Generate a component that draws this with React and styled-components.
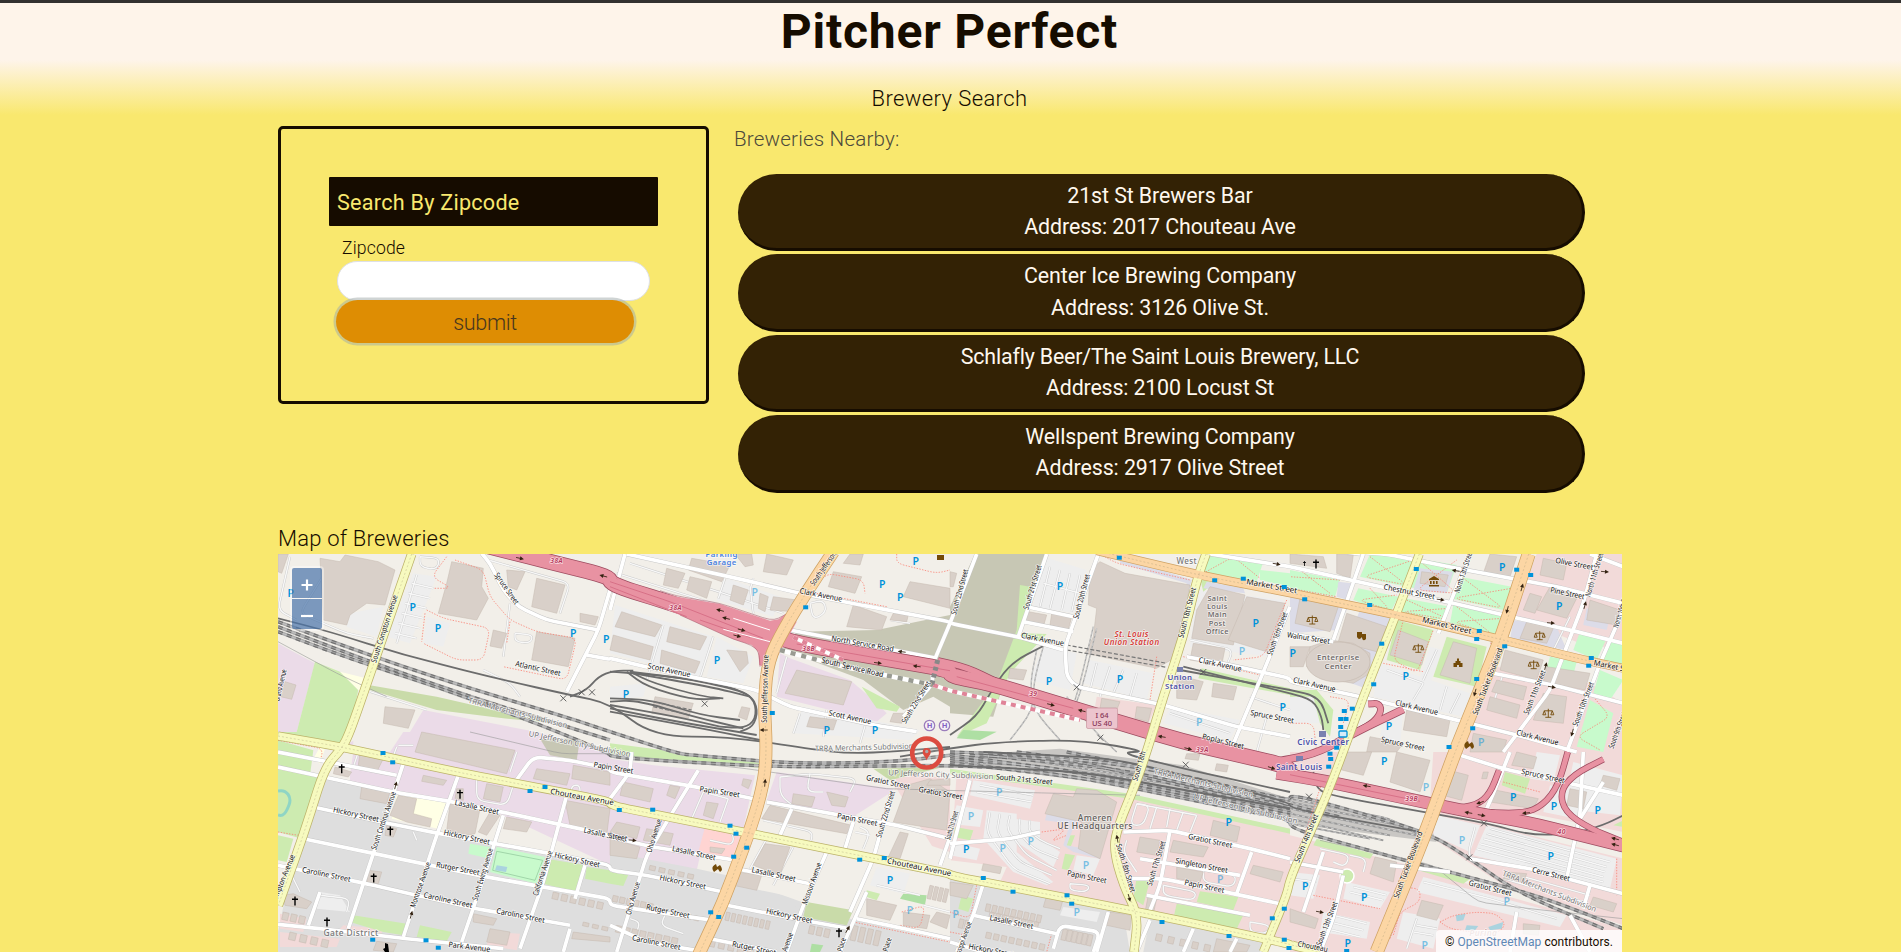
import React from 'react';
import styled, { createGlobalStyle } from 'styled-components';

const ink = '#160c00';
const sans = `Roboto, "Liberation Sans", sans-serif`;

const GlobalStyle = createGlobalStyle`
  *, *::before, *::after { box-sizing: border-box; }
  body { margin: 0; overflow: hidden; background: #f9e86e; color: ${ink}; font-family: ${sans}; }
`;

const Page = styled.div`
  height: 952px;
  overflow: hidden;
  border-top: 3px solid #333130;
  background: linear-gradient(#fef4ea 0, #fef4ea 57px, #f9e86e 112px);
`;
const Header = styled.header`
  display: flex;
  flex-direction: column;
  align-items: center;
  height: 123px;
  padding-right: 2px;
`;
const Title = styled.h1`
  margin: 0;
  height: 83px;
  font-size: 48px;
  line-height: 57px;
  font-weight: 700;
  letter-spacing: 0.78px;
`;
const Subtitle = styled.h2`
  margin: 0;
  font-size: 22px;
  line-height: 26px;
  font-weight: 300;
  letter-spacing: 0.4px;
`;
const Container = styled.main`
  width: 1344px;
  margin-left: 278px;
`;
const Columns = styled.div`
  display: flex;
  height: 399px;
  align-items: flex-start;
`;
const SearchPanel = styled.form`
  width: 431px;
  height: 278px;
  padding: 48px;
  border: 3px solid ${ink};
  border-radius: 5px;
`;
const Legend = styled.div`
  height: 49px;
  padding: 0 8px;
  border-radius: 1px;
  background: ${ink};
  color: #f9e86e;
  font-size: 21.6px;
  line-height: 52px;
  letter-spacing: 0.25px;
`;
const Fields = styled.div`
  display: flex;
  flex-direction: column;
  padding: 10px 8px 0 6px;
`;
const Label = styled.label`
  padding-left: 7px;
  height: 25px;
  font-size: 17.6px;
  line-height: 24px;
  font-weight: 300;
  letter-spacing: 0.15px;
`;
const Input = styled.input`
  height: 40px;
  margin-left: 2px;
  border: 1px solid #dee0e6;
  border-radius: 20px;
  background: #fff;
  outline: none;
`;
const Submit = styled.button`
  width: 298px;
  height: 43px;
  margin: -1px 0 0 1px;
  padding: 2px 0 0;
  border: 0;
  border-radius: 22px;
  background: #de8d03;
  box-shadow: 0 0 0 2.5px rgba(160, 170, 170, 0.5);
  color: #48361f;
  font-family: ${sans};
  font-size: 21.6px;
  font-weight: 300;
  letter-spacing: -0.35px;
`;
const Results = styled.section`
  width: 851px;
  margin-left: 25px;
`;
const ResultsTitle = styled.h3`
  margin: 0;
  height: 48px;
  font-size: 20.6px;
  line-height: 26px;
  font-weight: 300;
  letter-spacing: 0.17px;
  color: #4d4a3b;
`;
const CardList = styled.div`
  display: flex;
  flex-direction: column;
  gap: 3px;
  padding-left: 4px;
`;
const Card = styled.article`
  height: 77.4px;
  padding: 6px;
  border: solid ${ink};
  border-width: 0 3px 3px 0;
  border-radius: 40px;
  background: #332205;
  color: #fff8ee;
  text-align: center;
  font-size: 21.4px;
  line-height: 31.2px;
  letter-spacing: ${(p) => p.$track}px;
`;
const MapTitle = styled.h3`
  margin: 0;
  height: 29px;
  font-size: 22px;
  line-height: 28px;
  font-weight: 300;
  letter-spacing: 0.2px;
`;
const MapFrame = styled.section`
  position: relative;
  height: 398px;
  overflow: hidden;
`;
const MapSvg = styled.svg`
  display: block;
  width: 1344px;
  height: 398px;
  font-family: "Noto Sans", sans-serif;
`;
const ZoomControl = styled.div`
  position: absolute;
  top: 12px;
  left: 12px;
  display: flex;
  flex-direction: column;
  gap: 1px;
  padding: 2px;
  border-radius: 4px;
  background: rgba(255, 255, 255, 0.4);
`;
const ZoomButton = styled.button`
  display: grid;
  place-items: center;
  width: 30px;
  height: 30px;
  padding: 4px 0 0;
  border: 0;
  border-radius: ${(p) => (p.$top ? '2px 2px 0 0' : '0 0 2px 2px')};
  background: rgba(0, 60, 136, 0.5);
`;
const Attribution = styled.div`
  position: absolute;
  right: 0;
  bottom: 0;
  width: 186px;
  height: 22px;
  padding-left: 9px;
  border-radius: 4px 0 0 0;
  background: rgba(255, 255, 255, 0.8);
  font-size: 12px;
  line-height: 24px;
  letter-spacing: 0.04px;
  white-space: nowrap;
  a { color: #5f88b6; text-decoration: none; }
`;

/* Map geometry is kept per sector, three units to a pixel. */
const origin = { A: [270, 510], B: [610, 550], C: [950, 550], D: [1290, 550], E: [270, 732], F: [610, 752], G: [950, 752], H: [1290, 752] };
const points = (s) => {
  let o = origin.A;
  const out = [];
  s.trim().split(/\s+/).forEach((t) => {
    if (origin[t]) o = origin[t];
    else {
      const [x, y] = t.split(',').map(Number);
      out.push([+(o[0] + x / 3).toFixed(1), +(o[1] + y / 3).toFixed(1)]);
    }
  });
  return out;
};
const join = (s) => points(s).map((p) => p.join(',')).join(' ');

/* Line through the points with its corners rounded to at most r pixels. */
const curve = (s, r) => {
  const p = points(s);
  let d = `M${p[0]}`;
  for (let i = 1; i < p.length - 1; i += 1) {
    const [a, b, c] = [p[i - 1], p[i], p[i + 1]];
    const toward = (q) => {
      const len = Math.hypot(q[0] - b[0], q[1] - b[1]) || 1;
      const k = Math.min(r, len / 2) / len;
      return [b[0] + (q[0] - b[0]) * k, b[1] + (q[1] - b[1]) * k];
    };
    d += `L${toward(a)}Q${b} ${toward(c)}`;
  }
  return `${d}L${p[p.length - 1]}`;
};

const areas = [
  ['#ebdbe8', [
    'A 24,400 60,420 135,460 80,666 24,666', 'A 460,600 800,666 E 1020,60 1020,200 640,130 215,45 300,0 420,0',
    'E 240,130 250,60 560,125 880,185 1020,210 1020,400 700,250 540,210 380,190 240,160',
    'F 0,20 130,40 435,70 400,230 0,155', 'F 0,160 290,225 260,355 0,300', 'F 500,60 850,110 800,220 470,145',
    'B 510,310 540,325 720,390 790,450 830,490 800,515 500,440']],
  ['#dedede', [
    'E 150,130 370,180 355,265 520,300 1020,400 1020,660 24,660 24,600 70,380',
    'F 0,300 260,350 350,370 590,455 720,500 1020,570 1020,600 0,600', 'F 560,455 720,480 700,600 500,600',
    'G 80,400 520,480 540,600 0,600 0,380', 'G 600,500 950,570 930,600 580,600']],
  ['#f2dad9', [
    'G 20,60 540,130 1020,230 1020,570 540,470 0,370', 'H 0,250 360,340 640,430 1000,530 1000,600 0,600',
    'H 420,170 600,220 1000,320 1000,520 640,400 430,260', 'H 430,0 1000,0 1000,240 700,180 420,150',
    'D 560,340 900,400 1000,460 1000,606 520,606', 'D 740,12 1000,12 1000,300 870,280 670,200', 'C 440,440 620,465 590,530 430,500',
    'F 860,60 1020,80 1020,300 840,240', 'E 220,580 340,590 330,620 200,600', 'H 0,0 150,0 120,80 0,60',
    'E 30,545 110,560 100,600 30,590', 'E 660,600 750,605 740,655 650,640', 'E 30,600 210,620 200,645 30,645']],
  ['#ffd4d2', ['F 285,225 395,245 365,320 265,300']],
  ['#f2efe9', [
    'F 460,150 720,200 860,110 1020,370 640,290 420,230', 'F 420,250 650,300 780,330 720,470 380,400',
    'F 800,330 1020,370 1020,430 800,400', 'H 130,140 400,180 370,240 100,150', 'G 0,325 170,345 150,390 0,370', 'E 250,0 400,0 360,60 250,50']],
  ['#eeeeee', [
    'H 440,190 570,220 540,300 430,250', 'H 590,220 980,320 960,410 550,310', 'G 70,85 255,115 240,170 60,130',
    'G 110,175 200,185 200,300 310,390 290,400 190,360 100,260', 'G 190,200 270,210 270,260 330,300 310,345 200,270',
    'C 280,20 410,60 370,190 250,170', 'C 420,330 610,370 590,450 400,400', 'C 280,290 380,310 360,420 240,390',
    'B 350,85 510,140 490,200 320,150', 'B 15,165 310,260 270,380 0,310', 'B 320,260 430,320 400,400 290,380',
    'A 430,190 500,200 420,400 350,380', 'A 470,320 540,340 520,410 460,400', 'B 0,410 110,400 100,440 0,450',
    'B 580,470 930,540 900,570 550,550', 'C 740,120 1000,150 960,320 720,290', 'C 660,470 870,510 840,570 640,520',
    'H 170,390 300,420 270,470 160,440', 'H 0,360 90,370 70,440 0,430', 'H 400,375 830,490 810,525 380,420',
    'H 340,480 450,500 430,590 320,560', 'H 100,480 240,510 230,560 90,540', 'D 270,340 540,430 520,500 250,440',
    'D 420,290 460,300 420,400 390,380', 'D 0,430 70,420 90,520 0,520', 'H 740,0 810,10 790,90 720,80',
    'H 780,100 880,120 860,200 760,180', 'H 850,30 1000,70 990,190 820,170', 'F 800,345 900,365 880,425 780,400', 'E 150,480 210,490 240,540 140,530',
    'A 240,310 340,290 320,380 230,350', 'G 340,465 450,480 440,510 330,490', 'G 380,310 450,320 430,370 370,355', 'G 20,160 100,175 90,225 0,215',
    'D 280,510 340,480 330,590 270,560', 'G 0,270 90,290 80,325 0,310']],
  ['#c7c7b4', ['B 560,245 800,240 1020,195 C 0,170 75,12 290,12 215,220 130,500 0,490 B 1020,470 970,440 880,480 760,390 520,300', 'E 810,20 930,20 920,85 840,70']],
  ['#cdebb0', [
    'A 135,455 210,485 265,540 240,666 80,666', 'E 24,0 230,0 215,38 24,5', 'E 24,25 130,55 120,130 24,110', 'E 24,112 150,135 95,320 24,300',
    'E 830,380 945,400 920,480 820,455', 'E 950,405 1020,415 1020,455 945,440', 'C 210,105 240,110 215,250 290,252 180,370 110,520 20,560 140,400 200,240',
    'C 755,355 1020,415 1020,435 745,385', 'D 0,420 80,420 130,480 120,560 90,520 70,440 0,440', 'B 755,410 870,470 860,485 800,475',
    'G 15,225 70,235 60,265 10,255', 'G 560,375 600,385 580,460 550,440', 'G 680,455 880,490 860,530 670,500', 'G 750,418 865,435 850,475 740,450',
    'G 35,430 70,440 55,480 25,470', 'H 645,60 720,80 705,125 635,100', 'D 320,210 430,240 390,360 290,330', 'D 470,260 590,290 560,410 430,380',
    'E 250,550 410,575 400,610 340,600 240,570', 'E 450,580 545,600 530,628 440,615', 'F 0,360 55,368 40,402 0,395', 'F 770,415 810,425 800,445 770,435',
    'C 750,85 790,100 760,125', 'C 660,280 690,200 680,310 650,320', 'E 24,310 70,320 50,390 24,385',
    'H 80,260 250,305 240,320 70,280', 'H 380,335 540,380 520,395 370,350', 'G 0,50 540,125 1020,230 1020,245 540,140 0,65',
    'B 0,580 460,640 F 480,50 0,10', 'H 970,220 1000,205 1000,225', 'G 355,250 375,250 360,290 350,285', 'G 345,305 375,310 355,355 335,350']],
  ['#c9dba9', ['A 265,520 500,560 850,640 700,625 500,600 300,540', 'F 590,450 730,475 710,520 580,495', 'F 790,50 1000,45 840,85']],
  ['#c8facc', [
    'D 240,12 370,25 350,110 210,80', 'D 0,60 150,90 135,140 0,115', 'D 205,115 325,140 300,190 190,150', 'D 510,80 665,110 640,180 480,145',
    'D 490,165 640,200 610,260 480,220', 'D 375,25 500,45 470,130 350,110', 'D 345,145 480,170 450,215 330,190', 'D 870,245 950,265 920,330 850,300',
    'D 780,320 860,335 850,375 770,355', 'D 930,360 1000,390 960,450 910,430', 'D 900,450 970,490 940,606 860,590', 'C 780,12 940,35 920,95 760,65',
    'E 680,345 825,375 800,455 660,420', 'E 600,335 660,345 650,378 595,365', 'C 930,60 1020,70 1020,110 930,90', 'D 960,270 1000,280 1000,345 940,330']],
  ['#aedfa3', ['F 880,425 950,430 945,458 870,440', 'C 40,540 140,545 90,570 20,565', 'F 605,575 640,580 630,600 600,600']],
  ['#ffffe5', ['E 380,190 530,210 505,290 365,260', 'A 210,485 310,510 270,545', 'E 150,45 165,50 150,95 130,80']],
  ['#dcdce8', [
    'G 290,185 380,200 350,280 455,300 450,320 370,300 340,280 360,215 285,205', 'D 210,180 320,210 240,420 130,380', 'D 0,140 180,160 140,240 0,250',
    'D 670,210 800,230 830,300 660,270', 'C 510,20 725,90 700,180 690,220 680,200 710,100 510,40', 'D 390,55 490,65 470,130 370,120', 'D 890,175 960,200 950,240 880,225', 'C 770,95 880,115 885,130 760,115', 'D 145,95 185,100 175,150 140,140']],
  ['#aad3df', ['H 497,490 527,485 520,505 500,508', 'H 530,520 565,522 555,535 525,535', 'H 595,525 640,510 635,530 600,535', 'E 680,400 712,405 708,420 675,415']],
  ['#c9c7c4', ['G 100,5 330,-10 700,40 1020,140 H 200,175 430,245 440,270 0,215 G 1020,205 700,130 400,85 0,35']],
];

const buildings = `A 150,145 210,155 225,135 325,155 375,180 345,285 290,280 240,315 230,345 160,330
A 545,155 640,175 635,230 655,265 620,330 505,310 530,220
A 800,205 885,225 860,310 785,290
A 800,365 915,385 895,470 785,450
A 670,360 710,370 695,415 660,408
A 345,590 435,600 415,655 340,640
A 45,515 78,525 65,568 32,560
A 710,180 765,185 740,240 715,230
A 24,132 55,132 35,190 24,185
A 930,310 985,320 975,345 930,335
E 455,0 735,55 710,125 435,60
E 800,110 900,125 890,160 790,140
E 910,100 1020,120 1020,160 905,140
E 460,130 530,145 520,160 455,148
E 650,155 700,165 690,210 640,200
E 275,165 360,180 350,215 270,200
E 540,215 630,230 615,305 590,310 530,295
E 660,240 690,250 650,310 625,300
E 710,255 785,270 770,300 700,290
E 385,190 440,200 430,245 485,260 480,285 410,270 360,250
E 195,105 245,120 235,135 190,125
E 40,490 70,485 125,510 110,530 45,520
E 295,415 335,420 325,455 290,450
E 270,60 340,80 320,120 265,100
E 885,205 1020,230 1010,310 900,280
E 660,590 720,600 710,640 650,630
E 560,170 580,170 580,205 555,200
E 350,280 380,290 370,315 345,310
E 320,628 380,635 370,660 310,655
E 610,545 680,560 670,580 610,570
E 910,600 1020,615 1020,630 905,620
B 245,25 360,45 335,95 235,60
B 375,12 425,12 430,45 405,50
B 470,12 550,30 530,75 460,65
B 170,55 225,70 205,115 160,105
B 240,80 305,95 290,145 230,120
B 370,105 415,120 400,165 360,150
B 450,130 475,140 465,185 445,175
B 490,140 560,150 550,185 480,180
B 35,185 155,225 135,260 15,230
B 180,230 290,260 270,300 170,275
B 10,255 130,290 120,330 0,300
B 155,300 270,335 255,370 150,340
B 350,300 410,305 415,340 390,365
B 670,65 755,80 735,130 655,110
B 730,165 830,200 815,240 710,230
B 900,95 1020,115 1020,175 880,140
B 720,12 760,12 750,45 700,40
B 850,190 895,195 890,215 840,210
B 560,360 725,395 700,465 525,430
B 600,500 680,510 670,540 590,530
B 135,440 250,460 235,505 125,490
B 395,470 420,475 410,510 385,500
B 850,490 880,490 875,520 840,515
C 450,35 525,70 720,105 680,320 620,355 405,310 430,260 440,175 415,165 420,60
C 780,110 885,135 850,285 725,265 740,180
C 890,140 1005,160 965,310 835,270
C 235,185 290,195 280,230 225,220
C 305,190 365,200 355,240 300,225
C 730,280 825,295 815,345 720,330
C 680,375 760,395 740,450 680,445
C 560,470 605,475 595,515 555,505
C 455,445 510,455 500,480 450,475
C 790,400 860,410 850,450 785,440
C 180,355 230,360 220,390 175,385
C 0,65 20,70 10,110 0,110
D 30,145 145,170 120,245 15,220
D 170,190 290,230 260,305 145,275
D 60,290 120,270 190,280 240,310 240,370 190,400 100,385 50,350
D 395,65 475,75 465,110 390,100
D 325,240 415,275 395,345 300,315
D 490,275 560,295 540,400 450,375
D 600,12 680,20 660,80 580,70
D 720,130 755,140 735,190 700,180
D 780,110 870,125 830,205 740,180
D 710,215 790,235 770,280 690,265
D 645,300 760,330 740,390 630,360
D 620,390 710,410 700,450 605,425
D 600,440 690,465 680,505 590,480
D 770,350 900,370 885,420 760,395
D 760,430 830,440 820,520 730,510
D 350,480 480,510 470,560 340,540
D 760,25 830,40 820,90 750,75
D 900,150 990,180 980,225 890,210
D 140,12 190,15 180,85 140,70
D 0,290 60,290 40,350 0,350
D 240,560 340,580 320,606 230,606
D 550,550 650,570 640,606 540,606
D 0,12 100,20 110,55 0,40
F 40,90 130,110 120,150 30,130
F 180,100 210,105 195,140 170,130
F 290,150 325,155 310,200 280,190
F 400,80 425,85 415,110 395,100
F 550,125 615,135 605,165 545,155
F 650,120 715,135 705,165 665,160
F 480,160 725,220 710,245 455,200
F 465,275 540,285 510,370 430,340
F 385,360 455,370 440,415 370,400
F 890,100 960,80 1020,120 1010,235 850,210
F 870,240 895,245 870,320 835,315
F 300,285 345,290 335,305 300,300
F 20,210 90,225 80,260 0,240
F 110,230 190,245 180,280 100,265
F 0,260 90,285 80,320 0,310
F 770,440 860,460 840,505 770,490
F 960,85 1020,80 1020,100 950,100
F 880,480 960,490 950,530 880,520
F 980,480 1020,490 1010,530 960,510
G 310,125 370,135 380,110 440,115 500,150 450,320 385,290 395,210 285,185
G 570,255 630,265 620,310 560,300
G 670,265 775,285 760,315 660,300
G 790,205 870,225 860,270 780,250
G 680,345 760,360 750,390 680,380
G 910,340 1000,360 990,390 900,365
G 100,335 155,345 150,365 95,355
G 480,480 545,490 540,535 470,520
G 595,430 620,440 610,485 585,480
G 0,390 70,400 50,440 0,430
G 290,430 340,440 330,475 280,465
G 710,5 750,5 745,25 705,20
G 800,35 835,40 830,60 795,55
G 800,560 900,580 890,600 790,600
H 150,0 245,0 220,70 140,50
H 320,0 420,25 390,120 300,90
H 460,50 535,70 515,145 440,125
H 255,315 320,330 310,390 240,365
H 395,445 460,460 440,505 380,490
H 620,115 745,140 730,170 600,150
H 840,110 890,120 880,170 830,160
H 680,0 740,15 730,50 665,40
H 0,470 85,500 75,530 0,510
H 650,360 710,365 700,390 640,380
H 910,435 980,455 970,480 900,460
H 580,60 595,60 590,80 575,80
H 940,70 990,80 980,115 930,100
H 700,515 750,520 745,550 700,545`.split('\n');

/* Small lots laid out in rows: start, step, count, width, height. */
const lots = [
  ['E 850,480', 28, 6, 8, 9], ['E 940,570', 30, 3, 8, 5], ['F 120,340', 30, 5, 8, 6], ['F 350,480', 18, 8, 5, 11], ['F 10,430', 22, 6, 7, 8],
  ['F 110,460', 25, 7, 7, 6], ['G 110,455', 20, 9, 6, 10], ['G 120,480', 20, 8, 6, 9], ['G 30,500', 18, 2, 6, 12], ['G 620,545', 38, 5, 8, 9],
  ['F 960,400', 16, 4, 5, 18], ['F 600,520', 24, 3, 7, 11], ['E 40,540', 26, 3, 8, 10], ['E 60,600', 34, 4, 9, 10], ['G 340,530', 16, 6, 6, 15],
  ['G 110,540', 24, 8, 7, 8], ['F 20,520', 25, 8, 8, 9], ['F 300,560', 30, 8, 8, 10], ['F 730,520', 24, 4, 7, 20],
];

const minor = `A 635,130 660,160 700,240 745,290 830,330 985,360
A 1020,240 985,360 890,545
A 950,435 1020,448 B 0,325 190,370 440,420 540,470 790,525 920,545
B 45,12 0,180
B 50,12 380,85 570,130 780,170 1020,215 C 0,220 210,262 340,300
C 80,12 0,220 B 965,350 970,400 880,500
B 540,240 980,325
C 290,12 205,260
C 445,12 345,290 350,380 380,410 640,465
C 230,170 370,200
C 220,215 370,245
C 710,320 840,345 1020,385 D 0,395 210,440 500,510 700,560 860,606
D 210,12 0,-20
C 780,12 1020,50 D 0,50 340,125 620,190 860,245 1000,280
D 220,12 130,270
C 1020,170 930,390 840,606
C 1020,-5 D 0,-5 290,12 500,55 800,110 1000,160
D 540,12 480,160 445,250
D 920,12 880,160 780,420 640,606
D 1000,180 930,340 830,606
D 610,370 790,405 1000,460
D 0,250 130,275
C 640,465 860,530 1020,560
H 480,0 640,50 1000,130
H 660,0 620,100 590,170
H 880,0 870,190 830,380
H 940,90 870,200
H 540,320 720,350 1000,425
H 900,400 880,470
D 900,12 1000,50
E 24,60 380,130
E 24,105 370,180 550,210 720,245 1020,310 F 0,255 130,285 380,325
E 130,225 360,275 510,305 870,370 1020,400 F 0,355 110,370 340,420
E 100,320 290,360 650,435 1020,500 F 0,460 310,505
E 24,400 290,455 440,490 620,530 900,580
E 24,577 150,590 410,620 700,650
E 400,95 235,590
E 565,130 500,310 400,615
E 700,250 640,440 575,630
E 890,190 820,450 750,650
E 735,150 790,75 900,85 1020,110 F 0,60 260,105 430,140
E 900,590 880,660
E 945,400 915,500
E 150,480 115,580
F 265,55 185,185 110,310 20,600
F 65,0 60,60 0,140
F 470,150 860,220 1020,260
F 545,170 510,250
F 730,210 705,290
F 845,120 790,320 720,480
F 650,300 580,460 530,600
F 380,350 600,395
F 350,460 580,505 720,530
F 770,420 690,600
F 740,500 860,525 1020,560
F 0,520 110,570 290,600
F 300,560 500,600
F 1020,255 990,340
G 60,85 0,320
G 100,395 70,490 20,600
G 70,490 320,545
G 310,590 330,520 450,540 430,600
G 475,480 440,600
G 520,240 660,235 900,290 1020,320
G 660,235 630,400 590,500
G 570,320 870,370
G 530,380 640,380 990,455
G 905,300 860,425
G 0,275 180,260 270,240
G 600,505 560,600
G 590,430 900,490
G 730,530 700,600
G 860,560 840,600
G 0,570 100,600
H 160,370 130,500 90,600
H 0,330 160,360
H 100,300 40,480
H 300,340 480,360
H 680,480 660,600
H 840,490 900,600`.split('\n');

const yards = `A 170,180 90,310 230,370 310,385
A 60,140 24,300 80,330
A 450,140 510,145 500,180 450,170 450,140
A 440,195 380,400
A 425,220 490,235
A 415,250 480,265
A 405,280 470,295
A 395,310 460,325
A 385,340 450,355
A 375,370 440,385
A 655,150 900,220 870,310
A 735,370 790,375 780,400 735,395 735,370
A 280,560 250,666
A 300,545 470,600
A 720,280 700,440
A 640,480 720,520 750,560
B 60,40 340,130 520,190
B 345,85 325,145
B 340,170 20,70
B 160,225 110,390
B 310,260 270,385
B 420,110 430,190
B 600,160 640,150 650,185 610,210 600,160
B 570,490 550,550
B 650,480 640,560
B 770,510 750,580
B 530,320 500,430
B 840,210 900,220
B 430,85 420,120
C 300,50 270,170
C 330,60 300,175
C 360,70 335,180
C 390,75 365,185
C 280,100 390,130
C 440,340 420,420
C 480,350 450,440
C 520,360 490,430
C 560,370 540,440
C 720,270 850,300 830,345
C 660,490 840,550
C 680,480 860,530
C 950,500 920,606
C 900,440 1020,480
D 440,300 400,390
D 290,360 400,400
D 470,410 450,480
D 510,430 480,490
D 400,400 370,450
D 640,370 610,460
D 840,200 780,320
H 600,230 960,330
H 590,245 950,345
H 580,260 945,360
H 570,275 940,375
H 560,290 940,390
H 555,225 535,300 545,320
H 90,290 180,310 165,345 130,330
H 180,310 230,320 220,360
H 190,405 290,430
H 180,420 280,445
H 0,380 80,390
H 400,390 600,440 800,500
H 380,500 350,590
H 380,520 440,530
H 370,540 430,550
H 130,490 230,515
H 120,510 220,535
H 110,530 210,555
H 650,360 900,430
H 640,380 880,450
G 120,180 110,240 190,350 300,395
G 150,185 140,240 210,330 305,370
G 180,190 170,230 230,310 320,355
G 210,200 205,240 250,290 325,320
G 240,205 235,235 270,265 330,290
G 90,100 250,130
G 80,120 245,150
G 560,155 540,220 580,220 600,160 560,155
G 620,165 600,230
G 660,170 650,225
G 700,180 680,235
G 740,190 720,240
G 560,155 740,190
G 530,265 520,300 560,360
G 640,400 740,420 730,445 640,430 640,400
G 360,395 420,400 410,420 360,415 360,395
G 760,355 860,370 850,405 760,390 760,355
G 900,510 960,520 950,545 900,540 900,510
F 460,205 610,240 600,275
F 510,75 510,130 560,170
F 600,65 590,120 640,120
F 510,75 600,65 740,80 720,120
F 750,225 780,240 760,290
F 735,240 780,250
F 470,260 420,350
F 550,285 490,400
F 280,120 245,200
F 355,140 330,210
F 280,120 355,140
F 300,230 370,240 370,280 300,265
F 60,500 90,510 80,540
F 170,480 150,520 220,545
F 940,460 1020,480
F 800,400 930,430
E 385,40 430,40
E 380,45 365,85
E 265,60 250,105
E 740,60 720,120
E 620,140 620,205 710,220 730,160
E 900,195 905,160 930,160 930,190
E 60,420 90,480
E 430,300 440,325
E 150,490 240,500 230,540`.split('\n');

const tracks = `A 24,325 180,365 400,435 700,510 900,555 1020,580 B 130,560 360,560 600,597 F 720,5 860,-2 1020,-15
A 900,560 950,540 985,500 B 10,362 70,362
B 0,365 200,380 390,420 435,450 438,510 400,535 330,530
B 60,365 300,395 420,430 445,480 430,530 390,545
B 50,365 110,410 250,450 330,445
B 60,365 130,400 280,440 340,445
B 70,370 300,410 420,440
B 0,455 80,450 250,500 400,535
B 0,465 200,500 330,530
B 0,475 200,515 440,555
B 0,485 250,530 450,570
B 0,445 130,450 270,495 390,510
C 0,555 80,500 120,430 180,340 280,288
C 700,350 1020,430 D 0,430 70,450 95,500 100,540
C 690,360 1020,420 D 0,420 90,440 115,520
C -150,620 0,595 150,575 400,570 600,606 G 500,0 700,50 1020,120
G 100,0 500,20 1020,150 H 0,170 420,245
G 0,40 400,60 1020,170
H 70,60 80,110 120,130 400,180 600,215 720,250 850,245 940,220 1000,190`.split('\n');

const heavy = `A 24,335 200,400 400,470 600,535 900,625 1020,665 B 200,610 F 250,10 550,35 850,30 1020,10
A 24,365 250,450 500,530 800,640 B 0,610 F 0,15 220,30 520,45 1020,40 G 200,50 540,100 1020,200 H 0,230 400,340 670,410 810,455 1000,530
A 24,350 300,455 600,560 1020,690
G 350,0 700,70 1020,150 H 0,125 200,180 420,245 540,320 680,420 940,530
G 0,0 300,10 800,125 1020,170
G 0,20 300,45 1020,190
G 0,32 400,78 1020,203
G 0,8 500,78 1020,182
G 60,10 500,30 800,95 1020,160 H 150,195
G 100,10 500,50 1020,165
G 200,0 600,50 1020,145`.split('\n');

const faint = `G 0,10 400,30 1020,170 H 0,185 300,250
G 100,0 500,35 1020,140 H 0,150 350,225
G 0,30 250,40 700,100 1020,180 H 0,215 240,260
G 200,20 600,80 1020,160 H 0,170 380,250
H 0,140 300,200 380,245
H 0,200 280,265`.split('\n');

const disused = `C 430,230 390,400 375,450
C 440,235 400,400 380,455
C 280,290 250,400 250,480 180,570
C 260,300 240,400 250,480 330,570
C 350,440 430,540 500,606`.split('\n');

const paths = `A 530,140 485,200 545,235 490,235
A 555,150 640,180 660,260 720,330 800,365 920,385 890,510 700,470
A 470,300 520,325 660,355 640,450 560,450 460,400
A 465,310 455,395
A 720,335 710,400
B 600,130 650,70 760,90 765,130
B 620,130 830,170
B 860,12 860,40 980,70 1020,60
C 450,12 500,40 720,90
C 620,320 600,450
C 1010,150 940,320 850,330
C 700,320 930,375
C 760,70 850,20 930,85
D 0,115 140,140
D 30,60 120,130
D 150,90 0,80
D 240,20 350,105 220,80 370,30
D 240,115 300,180 205,150 320,135
D 520,85 640,175 490,145 665,115
D 500,170 610,255 490,215 640,205
D 350,150 480,210 335,185 480,175
D 375,20 500,130 380,120 500,30
D 910,440 960,500 860,560 930,600
D 340,210 310,330 380,370 430,240
D 280,340 400,365
D 0,520 70,520 80,606
D 120,440 180,450 160,520
D 600,280 640,270 830,310
E 24,25 160,50 150,90
E 24,110 150,135
E 24,300 85,310
E 24,405 60,410
G 275,240 350,230 300,270 350,250
G 80,400 60,500 0,480
G 0,540 50,550
G 305,545 290,600
H 640,90 750,120
H 330,405 390,410 390,450 330,480 310,550
H 450,510 490,490 560,480 620,485 650,520 610,550 480,530 450,510
H 70,430 270,470
H 100,80 0,380
H 980,320 980,430
H 478,20 280,560
H 500,20 300,560
F 875,480 945,460 930,530 870,520
F 730,500 690,590
F 730,510 1020,570`.split('\n');

const roadPaint = { Y: ['#f7fabf', '#bcb26a'], O: ['#fcd6a4', '#cfa263'], M: ['#e892a2', '#9e4c60'] };
const majors = [
  ['Y', 8.5, 'A 425,132 240,666 E 215,50 165,105 100,310 25,520'],
  ['Y', 8, 'E 24,12 215,45 560,120 1020,208 F 0,160 400,240 1020,365 G 0,370 540,475 700,507 1020,577 H 0,578 90,600'],
  ['M', 7, 'D 340,478 200,545 90,606 H 0,22 -60,30'],
  ['M', 6, 'D 235,462 265,460 275,480 255,515 200,545'],
  ['M', 5.5, 'H 627,55 600,125 560,160 490,168'],
  ['M', 5.5, 'H 833,0 805,100 760,160 700,185 570,180'],
  ['M', 5.5, 'H 940,22 850,68 810,120 825,180 900,230 1000,270'],
  ['M', 6, 'C -36,332 50,352 140,395'],
  ['M', 15, 'A 640,105 850,158 1020,200 B 0,102 200,165 480,255 560,280 1020,360 C 0,378 120,400 400,485 700,575 1020,650 H 0,72'],
  ['M', 12, 'H -40,63 110,88 400,150 540,180 720,212 1000,282'],
  ['Y', 8.5, 'C 768,12 740,90 700,260 640,440 590,606 G 555,100 505,220 490,290 520,400 565,490 552,600'],
  ['Y', 8, 'D 388,12 320,190 220,440 160,606 H 110,130 0,380 G 1010,430 940,600'],
  ['O', 8, 'C 440,2 760,78 1020,128 D 320,195 600,260 860,325 1000,355'],
  ['O', 13, 'D 716,12 635,260 530,520 495,606 H 400,260 260,600'],
  ['O', 12, 'B 670,5 590,125 520,240 475,330 462,450 470,606 F 460,100 425,220 340,450 265,610'],
];

const labels = [
  ['A', 'South Compton Avenue', 318, 460, 383, 258], ['A', 'Spruce Street', 672, 195, 735, 285], ['A', 'Atlantic Street', 735, 468, 870, 498],
  ['A', 'Grand Avenue', 28, 575, 50, 480], ['B', 'Clark Avenue', 568, 130, 695, 155], ['B', 'North Service Road', 663, 272, 850, 305],
  ['B', 'South Service Road', 633, 337, 818, 382], ['B', 'Scott Avenue', 112, 355, 240, 382], ['B', 'Scott Avenue', 655, 496, 782, 523],
  ['B', 'South Jefferson Avenue', 470, 518, 475, 315], ['B', 'South Jefferson', 612, 108, 680, 12], ['B', 'South 22nd Street', 887, 522, 962, 400],
  ['C', 'South 22nd Street', 18, 195, 55, 60], ['C', 'South 21st Street', 235, 180, 275, 48], ['C', 'South 20th Street', 385, 208, 420, 75],
  ['C', 'Clark Avenue', 212, 263, 340, 288], ['C', 'South 18th Street', 700, 265, 738, 115], ['C', 'Clark Avenue', 745, 337, 873, 365],
  ['C', 'Market Street', 888, 102, 1040, 130], ['C', 'South 16th Street', 965, 317, 1013, 190], ['C', 'Spruce Street', 900, 495, 1030, 520], ['C', 'Poplar Street', 755, 566, 880, 597],
  ['D', 'Chestnut Street', 280, 118, 433, 148], ['D', 'Market Street', 395, 216, 542, 252], ['D', 'North 13th Street', 508, 130, 548, 5],
  ['D', 'Olive Street', 795, 38, 908, 60], ['D', 'Pine Street', 780, 127, 882, 148], ['D', 'North 11th Street', 900, 142, 940, 12],
  ['D', 'Walnut Street', -10, 262, 118, 282], ['D', 'Clark Avenue', 8, 397, 135, 426], ['D', 'Clark Avenue', 315, 465, 442, 495],
  ['D', 'Spruce Street', 272, 575, 402, 603], ['D', 'Clark Avenue', 678, 554, 803, 586], ['D', 'South Tucker Boulevard', 562, 496, 638, 298],
  ['D', 'South 11th Street', 715, 495, 767, 365], ['D', 'South 10th Street', 862, 530, 912, 400], ['D', 'Market Street', 910, 345, 1050, 374],
  ['D', 'South 9th Street', 970, 597, 1010, 490], ['D', 'North 10th Street', 984, 235, 1020, 120],
  ['E', 'Hickory Street', 188, 240, 325, 270], ['E', 'Lasalle Street', 553, 218, 685, 248], ['E', 'Lasalle Street', 940, 301, 1065, 330],
  ['E', 'Hickory Street', 520, 308, 658, 338], ['E', 'Hickory Street', 852, 376, 988, 406], ['E', 'Rutger Street', 497, 405, 627, 430],
  ['E', 'Caroline Street', 95, 420, 240, 450], ['E', 'Caroline Street', 460, 496, 605, 528], ['E', 'Caroline Street', 678, 544, 823, 573],
  ['E', 'Park Avenue', 535, 645, 660, 660], ['E', 'Chouteau Avenue', 840, 185, 1030, 220], ['E', 'South Cardinal Avenue', 318, 355, 378, 182],
  ['E', 'Montrose Avenue', 435, 528, 482, 394], ['E', 'South Ewing Avenue', 622, 507, 670, 352], ['E', 'California Avenue', 803, 493, 848, 360],
  ['E', 'South Compton Avenue', -5, 570, 75, 372], ['E', 'Papin Street', 970, 105, 1088, 125],
  ['F', 'Papin Street', 268, 118, 388, 136], ['F', 'Papin Street', 680, 198, 800, 222], ['F', 'Gratiot Street', 767, 84, 898, 112], ['F', 'Gratiot Street', 925, 119, 1055, 143],
  ['F', 'Lasalle Street', 185, 296, 315, 325], ['F', 'Lasalle Street', 424, 360, 555, 389], ['F', 'Hickory Street', 148, 384, 286, 412],
  ['F', 'Hickory Street', 467, 484, 605, 514], ['F', 'Rutger Street', 107, 472, 237, 499], ['F', 'Rutger Street', 365, 583, 496, 610], ['F', 'Caroline Street', 65, 565, 210, 594],
  ['F', 'Ohio Avenue', 124, 303, 155, 205], ['F', 'Ohio Avenue', 62, 490, 90, 393], ['F', 'Missouri Avenue', 590, 460, 635, 335], ['F', 'South 22nd Street', 813, 258, 855, 120],
  ['F', 'Chouteau Avenue', 830, 334, 1022, 372], ['F', 'Street', -5, 257, 50, 268], ['F', 'Place', 697, 600, 708, 560], ['F', 'Place', 833, 600, 845, 560], ['F', 'Avenue', 530, 600, 550, 545],
  ['G', 'South 21st Street', 137, 82, 307, 98], ['G', 'Papin Street', 350, 370, 468, 394], ['G', 'Papin Street', 702, 398, 821, 423], ['G', 'Gratiot Street', 713, 260, 845, 288],
  ['G', 'Singleton Street', 675, 333, 832, 363], ['G', 'Lasalle Street', 118, 504, 248, 531], ['G', 'Hickory Street', 55, 590, 190, 615],
  ['G', 'South 18th', 562, 88, 587, 0], ['G', 'South 18th Street', 498, 278, 542, 422], ['G', 'South 17th Street', 605, 402, 647, 270], ['G', 'South 21st Street', 0, 265, 25, 180], ['G', 'Mississippi Avenue', 20, 640, 65, 512],
  ['H', 'Spruce Street', 693, 65, 822, 94], ['H', 'Cerre Street', 725, 360, 838, 388], ['H', 'Gratiot Street', 535, 400, 663, 432], ['H', 'South 14th Street', 27, 333, 85, 190],
  ['H', 'South Tucker Boulevard', 325, 440, 398, 242], ['H', 'South 13th Street', 93, 583, 143, 452], ['H', 'Chouteau', 22, 583, 112, 600],
];
const grayLabels = [
  ['A', 'TRRA Merchants Subdivision', 593, 578, 890, 655], ['E', 'UP Jefferson City Subdivision', 775, 12, 1080, 75], ['B', 'TRRA Merchants Subdivision', 615, 604, 910, 596],
  ['F', 'UP Jefferson City Subdivision', 835, 70, 1150, 82], ['G', 'TRRA Merchants Subdivision', 610, 65, 907, 136], ['G', 'UP Jefferson City Subdivision', 730, 140, 1040, 215], ['H', 'TRRA Merchants Subdivision', 635, 370, 915, 480],
];
const centered = [
  ['C', 545, 260, '#d6403a', 8, ['St. Louis', 'Union Station'], 1], ['C', 802, 153, '#656060', 7.4, ['Saint', 'Louis', 'Main', 'Post', 'Office']],
  ['C', 690, 391, '#4c50a8', 7.8, ['Union', 'Station'], 2], ['C', 710, 41, '#777', 8, ['West']], ['D', 145, 331, '#656060', 7.8, ['Enterprise', 'Center']],
  ['D', 100, 584, '#4c50a8', 8.2, ['Civic Center'], 2], ['H', 28, 53, '#4c50a8', 8, ['Saint Louis'], 2], ['G', 435, 206, '#5f5b58', 8.5, ['Ameren', 'UE Headquarters']],
  ['B', 335, 20, '#4a7fe0', 7.8, ['Parking', 'Garage'], 2], ['E', 243, 611, '#777', 8.4, ['Gate District']], ['H', 580, 552, '#bd9390', 8.4, ['Purina'], 1],
  ['A', 860, 158, '#b7365a', 6.8, ['38A'], 1], ['B', 197, 180, '#b7365a', 6.8, ['38A'], 1], ['B', 596, 302, '#b7365a', 6.8, ['38B'], 1], ['C', 250, 437, '#b7365a', 6.8, ['39'], 1],
  ['C', 757, 606, '#b7365a', 6.8, ['39A'], 1], ['H', 365, 146, '#b7365a', 6.8, ['39B'], 1], ['H', 815, 247, '#b7365a', 6.8, ['40'], 1],
];
const parking = 'A 62,260 428,304 504,366 910,382 1009,398 B 917,46 817,113 871,154 321,343 48,443 650,551 795,551 C 330,120 297,405 510,399 917,231 998,483 D 637,62 808,180 347,391 297,540 8,320 H 283,38 670,148 792,174 923,187 782,324 223,446 173,586 46,415 G 836,223 49,304 F 840,395';
const parkingSoft = 'B 434,137 C 876,315 748,529 D 574,589 G 148,132 63,203 242,278 158,300 408,352 811,393 380,492 17,498 F 900,485 H 408,118 516,277 650,459 404,590';
const stops = 'B 587,172 487,489 C 508,23 794,91 880,86 1003,111 D 44,148 239,165 379,57 275,281 251,403 187,476 163,483 152,507 168,507 152,531 140,593 568,243 560,267 644,289 560,387 548,535 477,591 680,59 722,75 904,324 896,347 E 339,63 368,91 825,165 780,177 308,623 468,625 505,647 F 28,174 128,173 360,221 378,245 410,287 371,314 302,481 326,495 749,323 823,318 G 100,378 189,419 351,430 365,455 636,510 837,552 967,499 1003,470 1003,563 1017,588 H 120,5 122,21 116,44 170,597';
const churches = 'E 215,110 570,187 361,297 311,438 75,507 171,570 F 687,542 D 78,42';
const scales = 'D 67,210 385,295 749,257 731,344 775,490';
const arrows = [['A', 750, 145, 12], ['A', 1000, 198, 195], ['B', 330, 181, 195], ['B', 348, 205, 195], ['B', 395, 240, 15], ['B', 382, 258, 15], ['B', 804, 339, 8], ['B', 920, 349, 188], ['B', 875, 305, 188], ['B', 461, 540, 180],
  ['C', 303, 464, 14], ['C', 395, 482, 195], ['C', 635, 560, 190], ['C', 715, 596, 14], ['C', 980, 42, 10], ['D', 497, 62, 190], ['D', 452, 149, 8], ['D', 696, 112, 285], ['D', 652, 180, 105], ['D', 783, 219, 5], ['D', 555, 428, 105], ['D', 786, 411, 10], ['D', 885, 165, 285], ['D', 767, 348, 285], ['D', 847, 548, 105], ['D', 945, 65, 5],
  ['E', 377, 160, 285], ['E', 424, 548, 285], ['F', 465, 92, 275], ['F', 68, 265, 5], ['F', 713, 532, 300], ['G', 502, 260, 260], ['G', 538, 438, 75], ['G', 965, 48, 20], ['H', 230, 102, 190], ['H', 570, 152, 160], ['H', 535, 182, 190], ['H', 575, 190, 10], ['H', 708, 183, 175], ['H', 975, 260, 195], ['H', 975, 278, 195], ['H', 90, 480, 10]];
const crosses = 'A 935,547 966,547 880,565 B 284,461 C 380,412 451,563 760,366 G 707,38 H 57,134 582,214 538,316';

const Lines = ({ data, round = 8, ...rest }) => (
  <g fill="none" strokeLinejoin="round" {...rest}>{data.map((d, i) => <path key={i} d={curve(d, round)} />)}</g>
);
const RoadLabels = ({ data, ...rest }) => (
  <g fontSize="7.7" paintOrder="stroke" stroke="#fff" strokeOpacity=".7" strokeWidth="1.6" {...rest}>
    {data.map(([s, t, x1, y1, x2, y2], i) => {
      const [a, b] = points(`${s} ${x1},${y1} ${x2},${y2}`);
      const dx = b[0] - a[0], dy = b[1] - a[1];
      return <text key={i} textLength={Math.hypot(dx, dy)} lengthAdjust="spacingAndGlyphs" transform={`translate(${a}) rotate(${(Math.atan2(dy, dx) * 180) / Math.PI})`}>{t}</text>;
    })}
  </g>
);
const Roads = ({ kind }) => {
  const list = majors.filter((m) => kind.includes(m[0]));
  return (
    <g fill="none" strokeLinejoin="round">
      {list.map(([k, w, d], i) => <path key={i} d={curve(d, 25)} stroke={roadPaint[k][1]} strokeWidth={w + 1} />)}
      {list.map(([k, w, d], i) => <path key={i} d={curve(d, 25)} stroke={roadPaint[k][0]} strokeWidth={w - 0.5} />)}
      {list.filter((m) => m[0] !== 'M').map((m, i) => <path key={i} d={curve(m[2], 25)} stroke="#a59a78" strokeOpacity=".7" strokeWidth=".5" strokeDasharray="2 2" />)}
    </g>
  );
};

function StreetMap() {
  return (
    <MapSvg viewBox="278 554 1344 398" aria-label="Street map">
      <rect x="278" y="554" width="1344" height="398" fill="#f2efe9" />
      {areas.map(([fill, list]) => <g key={fill} fill={fill}>{list.map((d, i) => <polygon key={i} points={join(d)} />)}</g>)}
      <path d="M278 791c9-2 14 6 11 14s-6 12-11 10" fill="none" stroke="#8fd5c5" strokeWidth="3" />
      <Lines data={yards} stroke="#c9c9c9" strokeWidth="2.2" />
      <Lines data={yards} stroke="#f8f8f8" strokeWidth="1.4" />
      <g fill="#d9d0c9" stroke="#c5b9af" strokeWidth=".5">
        {buildings.map((d, i) => <polygon key={i} points={join(d)} />)}
        {lots.map(([s, step, n, w, h], i) => points(s).map(([x, y]) => Array.from({ length: n }, (_, k) => (
          <rect key={`${i}-${k}`} x={x + (k * step) / 3} y={y + k * step * 0.07} width={w * 0.75} height={h * 0.75} transform={`rotate(13 ${x + (k * step) / 3} ${y})`} />
        ))))}
      </g>
      <ellipse cx="1338" cy="662" rx="32" ry="20" fill="#d9d0c9" stroke="#c5b9af" strokeWidth=".6" />
      <circle cx="1347" cy="876" r="7" fill="#cdebb0" stroke="#fff" strokeWidth="1.5" />
      <path d={`M${points('E 680,358 818,385 795,445 668,415').join('L')}z`} fill="none" stroke="#8fc59a" strokeWidth=".7" />
      <Lines data={faint} stroke="#999" strokeWidth="1.8" />
      <Lines data={faint} stroke="#ddd" strokeWidth=".8" strokeDasharray="3 3" />
      <Lines data={disused} round={40} stroke="#aaa" strokeWidth="1.3" />
      <Lines data={disused} round={40} stroke="#e6e6e6" strokeWidth=".6" strokeDasharray="3 2" />
      <Lines data={heavy} round={40} stroke="#aaa" strokeWidth="3.6" />
      <Lines data={heavy} round={40} stroke="#707070" strokeWidth="3.2" strokeDasharray="5 4.500" />
      <Lines data={heavy} round={40} stroke="#ddd" strokeWidth=".5" />
      <Lines data={tracks} round={40} stroke="#6c6c6c" strokeWidth="1.8" />
      <Lines data={['C 350,285 650,340', 'C 350,300 650,352', 'B 130,455 245,480', 'B 130,470 240,495']} stroke="#777" strokeWidth="1.2" strokeDasharray="4 2" />
      <Lines data={['A 24,395 200,490 350,560', 'E 600,0 875,65 F 0,5 410,50 830,110', 'F 830,110 G 250,122 570,130', 'H 90,265 430,340 565,450 720,470 1000,500']} stroke="#999" strokeWidth=".6" />
      <Lines data={paths} stroke="#fa8072" strokeWidth=".8" strokeDasharray="1.4 1.4" />
      <Lines data={minor} stroke="#c4c4c4" strokeWidth="4.4" />
      <Lines data={minor} stroke="#fff" strokeWidth="3.7" />
      <Roads kind="M" />
      <polygon points={join('B 150,127 200,140 330,162 480,212 505,208 530,190 560,215 480,360 448,345 445,305 425,285 370,268 210,195 150,170')} fill="#e892a2" />
      <Lines data={['B 150,122 200,138 330,160 480,210 505,206 535,188', 'B 450,350 447,305 425,285 370,268 210,195']} stroke="#9e4c60" strokeWidth=".5" />
      <Lines data={['B 0,95 180,155 460,265', 'B 0,110 230,200', 'B 270,210 420,262', 'B 560,282 1020,362', 'C 20,380 370,475', 'H 0,68 390,148']} stroke="#d0627b" strokeWidth=".7" />
      <Lines data={['B 370,205 480,240', 'B 340,238 480,275']} stroke="#fff" strokeWidth="1" />
      <Roads kind="YO" />
      <Lines data={['B 510,300 700,350 970,405']} stroke="#fff" strokeWidth="4.5" />
      <Lines data={['B 510,300 700,350 970,405']} stroke="#999b92" strokeWidth="4.5" strokeDasharray="5 6" />
      <Lines data={['B 550,262 700,330', 'B 970,405 C 0,422 390,510']} stroke="#fff" strokeWidth="4" />
      <Lines data={['B 550,262 700,330', 'B 970,405 C 0,422 390,510']} stroke="#e08498" strokeWidth="4" strokeDasharray="5 5" />
      <Lines data={['B 983,330 965,405']} stroke="#888" strokeWidth="5" strokeDasharray="4 3" />
      {points(crosses).map(([x, y], i) => <path key={i} d={`M${x - 3} ${y - 3}l6 6m0-6l-6 6`} stroke="#555" strokeWidth=".9" />)}
      <RoadLabels data={grayLabels} fill="#777" />
      <RoadLabels data={labels} fill="#111" />
      {centered.map(([s, x, y, fill, size, rows, style], i) => {
        const [[cx, cy]] = points(`${s} ${x},${y}`);
        return (
          <text key={i} x={cx} y={cy} fill={fill} fontSize={size} textAnchor="middle" fontStyle={style === 1 ? 'italic' : 'normal'} fontWeight={style ? 600 : 500}
            letterSpacing=".4" paintOrder="stroke" stroke="#fff" strokeOpacity=".65" strokeWidth="1.4">
            {rows.map((r, k) => <tspan key={r} x={cx} dy={k ? 8.2 : 0}>{r}</tspan>)}
          </text>
        );
      })}
      <g fill="#0092da" fontSize="10.5" fontWeight="600" textAnchor="middle">
        {points(parking).map(([x, y], i) => <text key={i} x={x} y={y}>P</text>)}
        <g opacity=".5">{points(parkingSoft).map(([x, y], i) => <text key={i} x={x} y={y}>P</text>)}</g>
      </g>
      {points(stops).map(([x, y], i) => <rect key={i} x={x - 2.5} y={y - 2} width="5" height="4" fill="#0092da" />)}
      <rect x="1177" y="667" width="6" height="5" fill="#7981b0" /><rect x="1319" y="731" width="7" height="6" fill="#7981b0" /><rect x="1296" y="756" width="7" height="5" fill="#7981b0" />
      <rect x="1339" y="731" width="8" height="6" rx="1" fill="#d6ecf8" stroke="#0092da" strokeWidth="1.3" />
      {points(churches).map(([x, y], i) => <path key={i} d={`M${x} ${y - 4.5}v9M${x - 3} ${y - 1.7}h6`} stroke="#000" strokeWidth="1.4" />)}
      <path d="M1304.500 561v5m-1.500-3.500h3" stroke="#000" strokeWidth=".8" />
      <path d="M385 943l3 1 1 8h-4l-2-3 2-1z" />
      {points(scales).map(([x, y], i) => <path key={i} d={`M${x} ${y - 4.5}v8.5m-3 0h6M${x - 4} ${y - 2.5}h8m-8 0l-1.5 4h3zm8 0l-1.5 4h3z`} fill="none" stroke="#734a08" strokeWidth=".9" />)}
      <g fill="#734a08">
        <path d="M1429 579l5-3 5 3v1h-10zm1 2h1.6v3H1430zm3 0h1.6v3H1433zm3 0h1.6v3H1436zm-7 4h10v1.5h-10z" />
        <path d="M1453.500 667v-4h2v-2h1.500v-2l1-1 1 1v2h1.500v2h2v4h-3.500v-2h-2v2zM1357 632h5v5q-3 4-5 0zm5 2h4v5q-3 3-4-1zM937 555h7v5h-7z" />
        <path d="M1466 749q-4-5 2-8l1 3 3-2q4 5 0 7l-2-3zM714 872q-4-5 2-8l1 3 3-2q4 5 0 7l-2-3z" />
      </g>
      {arrows.map(([s, x, y, a], i) => {
        const [[px, py]] = points(`${s} ${x},${y}`);
        return <g key={i} transform={`translate(${px} ${py}) rotate(${a})`}><path d="M-4 0h6" stroke="#321" strokeWidth=".8" /><path d="M4 0l-4-2v4z" fill="#321" /></g>;
      })}
      <g fill="#f5f1f5" stroke="#9b7dbb" strokeWidth="1.3"><circle cx="929.5" cy="725.5" r="5.2" /><circle cx="944.5" cy="725.5" r="5.2" /></g>
      <g fill="#8461c4" fontSize="7.5" fontWeight="700" textAnchor="middle"><text x="929.5" y="728.2">H</text><text x="944.5" y="728.2">H</text></g>
      <rect x="1086.500" y="708" width="31" height="20.500" rx="1.500" fill="#ecc4cd" stroke="#c9959f" strokeWidth=".7" />
      <g fill="#873457" fontSize="7.5" textAnchor="middle" fontWeight="500"><text x="1102" y="717.500">I 64</text><text x="1102" y="725.500">US 40</text></g>
      <circle cx="926.700" cy="753" r="14.500" fill="#fff" fillOpacity=".12" stroke="#dc4c40" strokeWidth="4.600" />
      <path d="M926.700 760.500c-1-4-4-5-4-8.500a4 4 0 018 0c0 3.500-3 4.500-4 8.500z" fill="#dc4c40" />
      <circle cx="926.700" cy="751.500" r="1.700" fill="#aaa" />
    </MapSvg>
  );
}

const breweries = [
  ['21st St Brewers Bar', '2017 Chouteau Ave', -0.1],
  ['Center Ice Brewing Company', '3126 Olive St.', -0.08],
  ['Schlafly Beer/The Saint Louis Brewery, LLC', '2100 Locust St', -0.18],
  ['Wellspent Brewing Company', '2917 Olive Street', -0.08],
];

export default function App() {
  return (
    <Page>
      <GlobalStyle />
      <Header>
        <Title>Pitcher Perfect</Title>
        <Subtitle>Brewery Search</Subtitle>
      </Header>
      <Container>
        <Columns>
          <SearchPanel onSubmit={(e) => e.preventDefault()}>
            <Legend>Search By Zipcode</Legend>
            <Fields>
              <Label htmlFor="zipcode">Zipcode</Label>
              <Input id="zipcode" />
              <Submit>submit</Submit>
            </Fields>
          </SearchPanel>
          <Results>
            <ResultsTitle>Breweries Nearby:</ResultsTitle>
            <CardList>
              {breweries.map(([name, address, track]) => (
                <Card key={name} $track={track}>
                  <div>{name}</div>
                  <div>Address: {address}</div>
                </Card>
              ))}
            </CardList>
          </Results>
        </Columns>
        <MapTitle>Map of Breweries</MapTitle>
        <MapFrame>
          <StreetMap />
          <ZoomControl>
            <ZoomButton $top aria-label="Zoom in"><svg width="12" height="12" viewBox="0 0 12 12"><path d="M6 .5v11M.5 6h11" stroke="#fff" strokeWidth="2.2" /></svg></ZoomButton>
            <ZoomButton aria-label="Zoom out"><svg width="12" height="12" viewBox="0 0 12 12"><path d="M0 6h12" stroke="#fff" strokeWidth="2.2" /></svg></ZoomButton>
          </ZoomControl>
          <Attribution>© <a href="#osm">OpenStreetMap</a> contributors.</Attribution>
        </MapFrame>
      </Container>
    </Page>
  );
}
